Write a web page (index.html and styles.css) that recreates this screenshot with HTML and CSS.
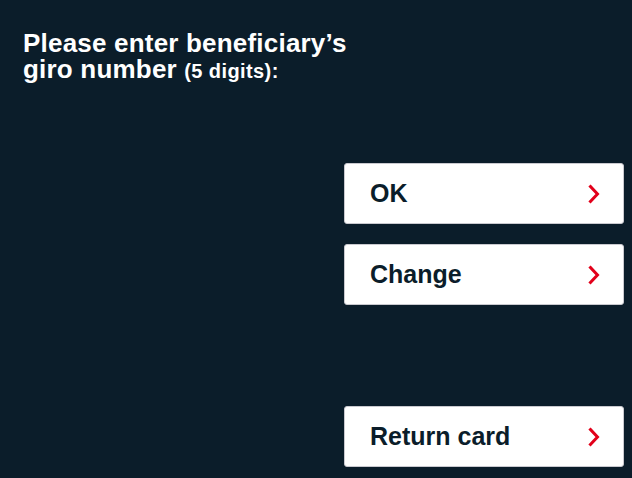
FILE: index.html
```html
<!DOCTYPE html>
<html lang="en">
<head>
<meta charset="utf-8">
<title>Giro number</title>
<link rel="stylesheet" href="styles.css">
</head>
<body>
<main class="screen">
  <h1 class="title">Please enter beneficiary’s<br>giro number <span class="hint">(5 digits):</span></h1>
  <div class="actions">
    <button class="btn"><span>OK</span><svg class="chev" viewBox="0 0 12 20" width="12" height="20"><polyline points="2.5,2.5 9.5,10 2.5,17.5"/></svg></button>
    <button class="btn"><span>Change</span><svg class="chev" viewBox="0 0 12 20" width="12" height="20"><polyline points="2.5,2.5 9.5,10 2.5,17.5"/></svg></button>
    <button class="btn btn-bottom"><span>Return card</span><svg class="chev" viewBox="0 0 12 20" width="12" height="20"><polyline points="2.5,2.5 9.5,10 2.5,17.5"/></svg></button>
  </div>
</main>
</body>
</html>
```
FILE: styles.css
```css
html, body {
  margin: 0;
  padding: 0;
  background: #0b1d2a;
}
.screen {
  width: 632px;
  height: 478px;
  box-sizing: border-box;
  padding: 30px 8px 0 23px;
  display: flex;
  flex-direction: column;
  font-family: "Liberation Sans", Arial, sans-serif;
}
.title {
  margin: 0;
  color: #ffffff;
  font-size: 26px;
  line-height: 26px;
  font-weight: bold;
  letter-spacing: 0.2px;
}
.hint {
  font-size: 20px;
  line-height: 20px;
  letter-spacing: 0.4px;
}
.actions {
  margin-top: 81px;
  display: flex;
  flex-direction: column;
  align-items: flex-end;
  gap: 20px;
}
.btn {
  width: 280px;
  height: 61px;
  box-sizing: border-box;
  display: flex;
  align-items: center;
  justify-content: space-between;
  padding: 0 23px 0 25px;
  background: #ffffff;
  border: 1px solid #c9c9cf;
  border-radius: 3px;
  font-family: "Liberation Sans", Arial, sans-serif;
  font-size: 25px;
  font-weight: bold;
  color: #0b1d2a;
  cursor: pointer;
}
.btn-bottom {
  margin-top: 81px;
}
.chev {
  display: block;
}
.chev polyline {
  fill: none;
  stroke: #e2001a;
  stroke-width: 3;
  stroke-linecap: square;
  stroke-linejoin: miter;
}
```
